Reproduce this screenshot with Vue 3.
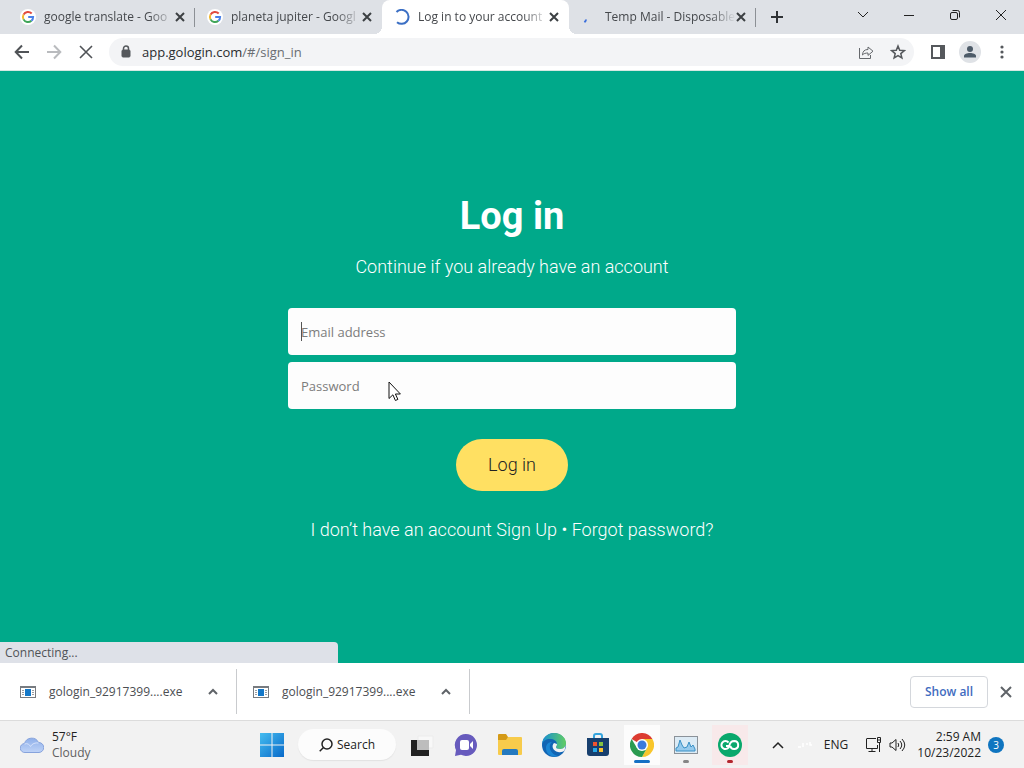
<template>
  <div class="screen">
    <header class="tabs">
      <div
        v-for="tab in tabs"
        :key="tab.title"
        class="tab"
        :class="{ active: tab.active, divided: tab.divided }"
      >
        <svg v-if="tab.icon === 'google'" class="favicon" viewBox="0 0 16 16">
          <circle cx="8" cy="8" r="8" fill="#fff" />
          <g class="ring">
            <path d="M3.5 5.6A5.1 5.1 0 0 1 11.7 4.5" stroke="#e04a3f" />
            <path d="M3.5 5.6a5.1 5.1 0 0 0 0 4.8" stroke="#f2b92d" />
            <path d="M3.5 10.4a5.1 5.1 0 0 0 7.9 1.4" stroke="#3fa558" />
            <path d="M11.4 11.8A5 5 0 0 0 13.1 8H8.2" stroke="#4a80e8" />
          </g>
        </svg>
        <svg v-else-if="tab.icon === 'loading'" class="favicon" viewBox="0 0 16 16">
          <path d="M2.500 3A7 7 0 1 1 3 13.2" stroke="#3b6fc4" stroke-width="2" />
        </svg>
        <svg v-else class="favicon" viewBox="0 0 16 16">
          <path d="M5 10.5q-.2 1.7-1.6 2.800" stroke="#3b6fdc" stroke-width="2" />
        </svg>
        <span class="tab-title">{{ tab.title }}</span>
        <button class="tab-close" aria-label="Close tab">
          <svg width="10" height="10" viewBox="0 0 10 10">
            <path d="M1 1l8 8M9 1L1 9" stroke="#3c4043" stroke-width="2" />
          </svg>
        </button>
      </div>
      <button class="tab-add" aria-label="New tab">
        <svg width="12" height="12" viewBox="0 0 12 12">
          <path d="M6 0v12M0 6h12" stroke="#2f3235" stroke-width="2" />
        </svg>
      </button>
      <div class="window-buttons">
        <button aria-label="Search tabs">
          <svg width="12" height="12" viewBox="0 0 12 12"><path d="M1 3l5 5 5-5" /></svg>
        </button>
        <button aria-label="Minimize">
          <svg width="12" height="12" viewBox="0 0 12 12"><path d="M1 6.5h10" /></svg>
        </button>
        <button aria-label="Restore">
          <svg width="12" height="12" viewBox="0 0 12 12">
            <rect x="1.5" y="3.5" width="7" height="7" rx="1.5" />
            <path d="M3.5 1.5h5a2 2 0 0 1 2 2v5" />
          </svg>
        </button>
        <button aria-label="Close">
          <svg width="12" height="12" viewBox="0 0 12 12"><path d="M1 1l10 10M11 1L1 11" /></svg>
        </button>
      </div>
    </header>

    <nav class="toolbar">
      <button aria-label="Back">
        <svg width="16" height="16" viewBox="0 0 16 16">
          <path d="M15 8H2M8 1.5L1.7 8 8 14.5" stroke="#505357" stroke-width="2" />
        </svg>
      </button>
      <button aria-label="Forward">
        <svg width="16" height="16" viewBox="0 0 16 16">
          <path d="M1 8h13M8 1.5L14.3 8 8 14.5" stroke="#b9bbbe" stroke-width="2" />
        </svg>
      </button>
      <button aria-label="Stop">
        <svg width="16" height="16" viewBox="0 0 16 16">
          <path d="M2 2l12 12M14 2L2 14" stroke="#505357" stroke-width="1.6" />
        </svg>
      </button>
      <div class="omnibox">
        <svg width="10" height="14" viewBox="0 0 10 14">
          <rect x="1" y="5" width="8" height="7" rx="1" fill="#55585c" stroke="#55585c" />
          <path d="M2.5 5V3.5a2.5 2.5 0 0 1 5 0V5" stroke="#55585c" stroke-width="1.5" />
        </svg>
        <a class="url" href="#/sign_in">app.gologin.com<span>/#/sign_in</span></a>
        <button aria-label="Share">
          <svg width="16" height="16" viewBox="0 0 16 16">
            <path
              d="M1.5 4v10.5h11V11M4.5 11c.2-3.8 2-5.5 5.5-5.5V3l5 4.2-5 4.2V9c-2.5 0-4.2.5-5.5 2z"
              stroke="#65686c"
            />
          </svg>
        </button>
        <button aria-label="Bookmark">
          <svg width="16" height="16" viewBox="0 0 16 16">
            <path
              d="M8 2l1.7 4.2 4.6.4-3.5 3 1.1 4.4L8 11.7 4.1 14l1.1-4.4-3.5-3 4.6-.4z"
              stroke="#55585c"
              stroke-width="1.5"
            />
          </svg>
        </button>
      </div>
      <button aria-label="Side panel">
        <svg width="16" height="16" viewBox="0 0 16 16">
          <rect x="2" y="2" width="12" height="12" stroke="#55585c" stroke-width="2" />
          <path d="M10 2h4v12h-4z" fill="#55585c" />
        </svg>
      </button>
      <button aria-label="Profile">
        <svg width="22" height="22" viewBox="0 0 22 22">
          <circle cx="11" cy="11" r="11" fill="#dfe2e6" />
          <circle cx="11" cy="8" r="3" fill="#4d5b68" />
          <path d="M5 16.5V15c0-4 12-4 12 0v1.5z" fill="#4d5b68" />
        </svg>
      </button>
      <button aria-label="Menu">
        <svg width="4" height="14" viewBox="0 0 4 14">
          <circle v-for="y in [2, 7, 12]" :key="y" cx="2" :cy="y" r="1.6" fill="#55585c" />
        </svg>
      </button>
    </nav>

    <main class="page">
      <form class="login" @submit.prevent>
        <h1>Log in</h1>
        <p class="subtitle">Continue if you already have an account</p>
        <div class="field">
          <input v-model="email" type="email" placeholder="Email address" aria-label="Email address" />
          <i class="caret"></i>
        </div>
        <div class="field">
          <input v-model="password" type="password" placeholder="Password" aria-label="Password" />
          <svg class="pointer" width="14" height="21" viewBox="0 0 14 21">
            <path
              d="M1 1v16.5l3.9-3.7 2.5 5.7 2.5-1.1-2.5-5.4h5z"
              fill="#fff"
              stroke="#111"
            />
          </svg>
        </div>
        <button class="submit" type="submit">Log in</button>
        <p class="links">
          I don’t have an account <a href="#/sign_up">Sign Up</a> •
          <a href="#/forgot">Forgot password?</a>
        </p>
      </form>
      <div class="status">Connecting...</div>
    </main>

    <section class="downloads">
      <div v-for="n in 2" :key="n" class="download">
        <svg width="16" height="12" viewBox="0 0 16 12">
          <rect x=".5" y=".5" width="15" height="11" fill="#fff" stroke="#777b80" />
          <path d="M0 1h16" stroke="#777b80" stroke-width="2" />
          <path d="M2 4.5h2M2 6.5h2M2 8.5h2M12 4.5h2M12 6.5h2M12 8.5h2" stroke="#9a9da1" />
          <rect x="5" y="3" width="6" height="7" fill="#1478c8" />
        </svg>
        <span>gologin_92917399....exe</span>
        <button aria-label="Download options">
          <svg width="10" height="7" viewBox="0 0 10 7">
            <path d="M1 6l4-4 4 4" stroke="#5f6368" stroke-width="2" />
          </svg>
        </button>
      </div>
      <button class="show-all">Show all</button>
      <button class="bar-close" aria-label="Close downloads bar">
        <svg width="12" height="12" viewBox="0 0 12 12">
          <path d="M1 1l10 10M11 1L1 11" stroke="#5f6368" stroke-width="2" />
        </svg>
      </button>
    </section>

    <footer class="taskbar">
      <div class="weather">
        <svg width="24" height="16" viewBox="0 0 24 16">
          <defs>
            <linearGradient id="cloud" x1="0" y1="0" x2="0" y2="1">
              <stop offset="0" stop-color="#8fb0ea" />
              <stop offset="1" stop-color="#bfd3f7" />
            </linearGradient>
          </defs>
          <path
            d="M5 15.5a4.5 4.5 0 0 1-.5-9A7.5 7.5 0 0 1 18.5 5.5a5 5 0 0 1 .5 10z"
            fill="url(#cloud)"
            stroke="#87a3dc"
          />
          <path d="M4.5 7c3-1 5 .5 6 2.5 1.5-3 5-4 8-3.5" stroke="#d5e2fb" />
        </svg>
        <div>
          <div>57°F</div>
          <div class="muted">Cloudy</div>
        </div>
      </div>

      <div class="apps">
        <button class="app" aria-label="Start">
          <svg width="24" height="24" viewBox="0 0 24 24">
            <defs>
              <linearGradient id="win" x1="0" y1="0" x2="1" y2="1">
                <stop offset="0" stop-color="#45bdf0" />
                <stop offset="1" stop-color="#0869c9" />
              </linearGradient>
            </defs>
            <path
              d="M0 0h11.5v11.5H0zM12.5 0H24v11.5H12.5zM0 12.5h11.5V24H0zM12.5 12.5H24V24H12.5z"
              fill="url(#win)"
            />
          </svg>
        </button>
        <button class="search">
          <svg width="14" height="14" viewBox="0 0 14 14">
            <circle cx="8" cy="6" r="5" stroke="#222" stroke-width="1.5" />
            <path d="M4.5 9.5L.7 13.3" stroke="#222" stroke-width="1.5" />
          </svg>
          Search
        </button>
        <button class="app" aria-label="Task view">
          <svg width="24" height="24" viewBox="0 0 24 24">
            <path d="M8 3h15v12H8z" fill="#f8f8f8" stroke="#ececec" />
            <path d="M1 7h18v16H1z" fill="#222" />
            <path d="M7 7h12v10H7z" fill="#bdbdbd" />
          </svg>
        </button>
        <button class="app" aria-label="Chat">
          <svg width="24" height="24" viewBox="0 0 24 24">
            <path d="M12 1a11 11 0 1 1-5 20.8L1 23l1-6A11 11 0 0 1 12 1z" fill="#675bbd" />
            <rect x="6" y="7" width="9" height="10" rx="2" fill="#fff" />
            <path d="M16 11l3-3v8l-3-3z" fill="#fff" />
          </svg>
        </button>
        <button class="app" aria-label="File Explorer">
          <svg width="24" height="24" viewBox="0 0 24 24">
            <path d="M0 2q0-1 1-1h7l2 3v4H0z" fill="#d49a17" />
            <path d="M0 7h8l2-3h13q1 0 1 1v16q0 1-1 1H1q-1 0-1-1z" fill="#f7cb4b" />
            <path d="M4 22v-4q0-2 2-2h12q2 0 2 2v4z" fill="#2479bf" />
          </svg>
        </button>
        <button class="app" aria-label="Edge">
          <svg width="24" height="24" viewBox="0 0 24 24">
            <defs>
              <linearGradient id="edge" x1="0" y1="0" x2="1" y2="0">
                <stop offset="0" stop-color="#1690d4" />
                <stop offset="1" stop-color="#61cd62" />
              </linearGradient>
            </defs>
            <circle cx="12" cy="12" r="12" fill="#1265b4" />
            <path
              d="M0 11C1 4 6 0 12 0c7 0 12 5 12 10 0 4-3 6-6 6-2 0-4-1-4-2 0-.5 1-1 1-3 0-3-3-5-7-5-4 0-7 2-8 5z"
              fill="url(#edge)"
            />
            <path d="M10 9c-5 4-1 13 6 14-5 2-12-1-12-8 0-4 3-6 6-6z" fill="#1b86d4" />
            <path
              d="M12 10c-3 3-1 8 4 9 3 .6 5-.2 6.5-1.2L24 11c-1 4-3.5 5-6 5-3 0-4-1-4-2s1-1 1-3z"
              fill="#f3f3f3"
            />
          </svg>
        </button>
        <button class="app" aria-label="Store">
          <svg width="24" height="24" viewBox="0 0 24 24">
            <path d="M8 6V3q0-2 2-2h4q2 0 2 2v3" stroke="#35a4dd" stroke-width="2" />
            <path d="M1 5h22v15q0 3-3 3H4q-3 0-3-3z" fill="#173f6e" />
            <path d="M7 9h4v4H7z" fill="#ef5430" />
            <path d="M13 9h4v4h-4z" fill="#83c341" />
            <path d="M7 15h4v4H7z" fill="#25a8e8" />
            <path d="M13 15h4v4h-4z" fill="#fdc22d" />
          </svg>
        </button>
        <button class="app current" aria-label="Chrome">
          <svg width="24" height="24" viewBox="0 0 24 24">
            <path d="M12 12L1.6 6A12 12 0 0 1 22.4 6z" fill="#dc3c31" />
            <path d="M12 12V6h10.4A12 12 0 0 1 12 24l5-9z" fill="#f8c62c" />
            <path d="M12 12l5 3-5 9A12 12 0 0 1 1.6 6L7 15z" fill="#2b9b50" />
            <circle cx="12" cy="12" r="6" fill="#fff" />
            <circle cx="12" cy="12" r="4.5" fill="#3979dd" />
          </svg>
        </button>
        <button class="app running" aria-label="Resource Monitor">
          <svg width="24" height="18" viewBox="0 0 24 18">
            <rect x=".5" y=".5" width="23" height="17" fill="#dcebf5" stroke="#8b9299" />
            <path
              d="M2 15v-3l2-1 2-7 2 5 2 3 3-1 2-5 2 5 2-2 2 4v2z"
              fill="#95caed"
              stroke="#3990c5"
            />
          </svg>
        </button>
        <button class="app alert" aria-label="GoLogin">
          <svg width="24" height="24" viewBox="0 0 24 24">
            <circle cx="12" cy="12" r="12" fill="#0aa86c" />
            <path
              d="M10.5 9.5a4 4 0 1 0 .8 3.5H8M11.3 13c.5-3 2-5 5-5a4 4 0 1 1-4 5"
              stroke="#fff"
              stroke-width="2"
            />
          </svg>
        </button>
      </div>

      <div class="tray">
        <button aria-label="Hidden icons">
          <svg width="12" height="8" viewBox="0 0 12 8">
            <path d="M1 7l5-5 5 5" stroke="#222" stroke-width="1.5" />
          </svg>
        </button>
        <svg class="faint" width="16" height="8" viewBox="0 0 16 8">
          <path d="M1 6h3M6 2v4M9 3h2M13 1v3h2" stroke="#fff" stroke-width="1.5" />
        </svg>
        <span class="lang">ENG</span>
        <svg width="17" height="16" viewBox="0 0 17 16">
          <path
            d="M11 1.5H2Q1.5 1.5 1.5 2v9.5h11V8M7 11.5v3M3.5 14.5h7M14.5 6v9M12.5.5h3v5h-3zM12.5 3h3"
            stroke="#222"
          />
        </svg>
        <svg width="17" height="14" viewBox="0 0 17 14">
          <path
            d="M1 5h2l4-3.5v11L3 9H1zM9 5q1.5 2 0 4M11 3q3.5 4 0 8M13 1q5.5 6 0 12"
            stroke="#222"
          />
        </svg>
        <div class="clock">
          <div>2:59 AM</div>
          <div>10/23/2022</div>
        </div>
        <span class="count">3</span>
      </div>
    </footer>
  </div>
</template>

<script setup>
import { ref } from "vue";

const email = ref("");
const password = ref("");

const tabs = [
  { title: "google translate - Goo", icon: "google", divided: true },
  { title: "planeta jupiter - Googl", icon: "google" },
  { title: "Log in to your account", icon: "loading", active: true },
  { title: "Temp Mail - Disposable", icon: "waiting", divided: true },
];
</script>

<style>
body {
  margin: 0;
}
</style>

<style scoped>
.screen {
  display: flex;
  flex-direction: column;
  min-height: 100vh;
  font-family: "Open Sans", "Noto Sans", sans-serif;
  font-size: 12px;
  line-height: 16px;
  color: #222;
  background: #fff;
}

* {
  box-sizing: border-box;
}

svg {
  fill: none;
  flex: none;
}

button {
  display: flex;
  align-items: center;
  justify-content: center;
  padding: 0;
  border: none;
  background: none;
  font: inherit;
  color: inherit;
}

a {
  color: inherit;
  text-decoration: none;
}

/* tab strip */
.tabs {
  display: flex;
  height: 34px;
  padding-left: 8px;
  background: #dee1e6;
}

.tab {
  position: relative;
  display: flex;
  align-items: center;
  flex: 0 1 187px;
  min-width: 0;
  padding: 0 10px 0 12px;
  color: #45484c;
}

.tab.active {
  background: #fff;
  border-radius: 8px 8px 0 0;
}

.tab.active::before,
.tab.active::after {
  content: "";
  position: absolute;
  bottom: 0;
  width: 8px;
  height: 8px;
}

.tab.active::before {
  left: -8px;
  background: radial-gradient(circle at 0 0, #dee1e6 8px, #fff 8px);
}

.tab.active::after {
  right: -8px;
  background: radial-gradient(circle at 100% 0, #dee1e6 8px, #fff 8px);
}

.tab.divided::after {
  content: "";
  position: absolute;
  right: 0;
  top: 8px;
  width: 1px;
  height: 19px;
  background: #8c9095;
}

.favicon {
  width: 16px;
  height: 16px;
}

.ring {
  stroke-width: 2px;
}

.tab-title {
  flex: 1;
  margin-left: 8px;
  overflow: hidden;
  white-space: nowrap;
  mask-image: linear-gradient(to right, #000 80%, transparent);
}

.tab-add {
  width: 42px;
}

.window-buttons {
  display: flex;
  margin-left: auto;
  padding-bottom: 5px;
}

.window-buttons button {
  width: 46px;
}

.window-buttons path,
.window-buttons rect {
  stroke: #222;
}

/* toolbar */
.toolbar {
  display: flex;
  align-items: center;
  height: 37px;
  padding: 0 6px;
  border-bottom: 1px solid #d5e8e2;
}

.toolbar button {
  width: 32px;
  height: 32px;
}

.omnibox {
  display: flex;
  align-items: center;
  flex: 1;
  height: 28px;
  margin: 0 8px 0 7px;
  padding-left: 12px;
  border-radius: 14px;
  background: #f3f4f6;
}

.url {
  flex: 1;
  margin-left: 11px;
  font-size: 13px;
  color: #2a2c2f;
}

.url span {
  color: #696d72;
}

/* page */
.page {
  position: relative;
  display: flex;
  flex: 1;
  align-items: center;
  justify-content: center;
  padding: 40px 20px;
  background: #00a98a;
}

.login {
  display: flex;
  flex-direction: column;
  align-items: center;
  width: 100%;
  max-width: 448px;
  font-family: Roboto, sans-serif;
  font-size: 18px;
  line-height: 24px;
  color: #fff;
}

h1 {
  margin: 0;
  font-size: 38px;
  line-height: 46px;
  font-weight: 700;
}

.subtitle {
  margin: 16px 0 29px;
  font-weight: 300;
}

.field {
  position: relative;
  width: 100%;
  margin-bottom: 7px;
}

.field input {
  display: block;
  width: 100%;
  height: 47px;
  padding: 2px 13px 0;
  border: none;
  border-radius: 4px;
  outline: none;
  background: #fdfdfd;
  font-family: "Open Sans", "Noto Sans", sans-serif;
  font-size: 13px;
  color: #333;
}

.field input::placeholder {
  color: #7c7c7c;
}

.caret {
  position: absolute;
  left: 13px;
  top: 14px;
  width: 1px;
  height: 19px;
  background: #555;
}

.pointer {
  position: absolute;
  left: 100px;
  top: 19px;
}

.submit {
  height: 52px;
  margin: 23px 0 27px;
  padding: 0 32px;
  border-radius: 26px;
  background: #ffe062;
  font-weight: 300;
  color: #222;
}

.links {
  margin: 0;
  font-weight: 300;
}

.status {
  position: absolute;
  left: 0;
  bottom: 0;
  width: 33%;
  padding: 3px 5px 2px;
  border-radius: 0 4px 0 0;
  background: #dee1e8;
  color: #505357;
}

/* downloads */
.downloads {
  display: flex;
  align-items: center;
  height: 57px;
  padding-right: 8px;
}

.download {
  display: flex;
  align-items: center;
  height: 45px;
  padding: 0 13px 0 20px;
  border-right: 1px solid #c9cbce;
  color: #4b4e52;
}

.download + .download {
  padding-left: 16px;
}

.download span {
  width: 140px;
  margin-left: 13px;
}

.download button {
  width: 20px;
  height: 24px;
  margin-left: 14px;
}

.show-all {
  width: 78px;
  height: 32px;
  margin-left: auto;
  border: 1px solid #d4d7dc;
  border-radius: 4px;
  font-weight: 600;
  color: #416cc0;
}

.bar-close {
  width: 20px;
  height: 24px;
  margin-left: 8px;
}

/* taskbar */
.taskbar {
  display: flex;
  align-items: center;
  height: 48px;
  border-top: 1px solid #dcdcdc;
  background: #f2f2f2;
}

.weather {
  display: flex;
  align-items: center;
  flex: 0 1 250px;
  gap: 8px;
  padding-left: 20px;
}

.muted {
  color: #606060;
}

.apps {
  display: flex;
  align-items: center;
}

.app {
  position: relative;
  width: 44px;
  height: 40px;
}

.search {
  gap: 4px;
  width: 98px;
  height: 31px;
  margin: 0 4px;
  border-radius: 16px;
  background: #fcfcfc;
  box-shadow: 0 1px 1px #e2e2e2;
}

.app.current,
.app.alert {
  padding: 0 4px;
  background: #fcfcfc content-box;
}

.app.alert {
  background: #f8e9ea content-box;
}

.app.current::after,
.app.running::after,
.app.alert::after {
  content: "";
  position: absolute;
  bottom: 2px;
  width: 6px;
  height: 3px;
  border-radius: 2px;
  background: #858585;
}

.app.current::after {
  width: 16px;
  background: #1470c4;
}

.app.alert::after {
  background: #b3262e;
}

.tray {
  display: flex;
  align-items: center;
  gap: 7px;
  margin-left: auto;
  padding-right: 20px;
}

.tray button {
  width: 24px;
  height: 32px;
}

.faint {
  margin-right: 4px;
}

.lang {
  margin-right: 10px;
}

.clock {
  margin-left: 4px;
  text-align: right;
}

.count {
  width: 16px;
  height: 16px;
  border-radius: 8px;
  background: #0f75c0;
  color: #fff;
  font-size: 10px;
  text-align: center;
}
</style>
